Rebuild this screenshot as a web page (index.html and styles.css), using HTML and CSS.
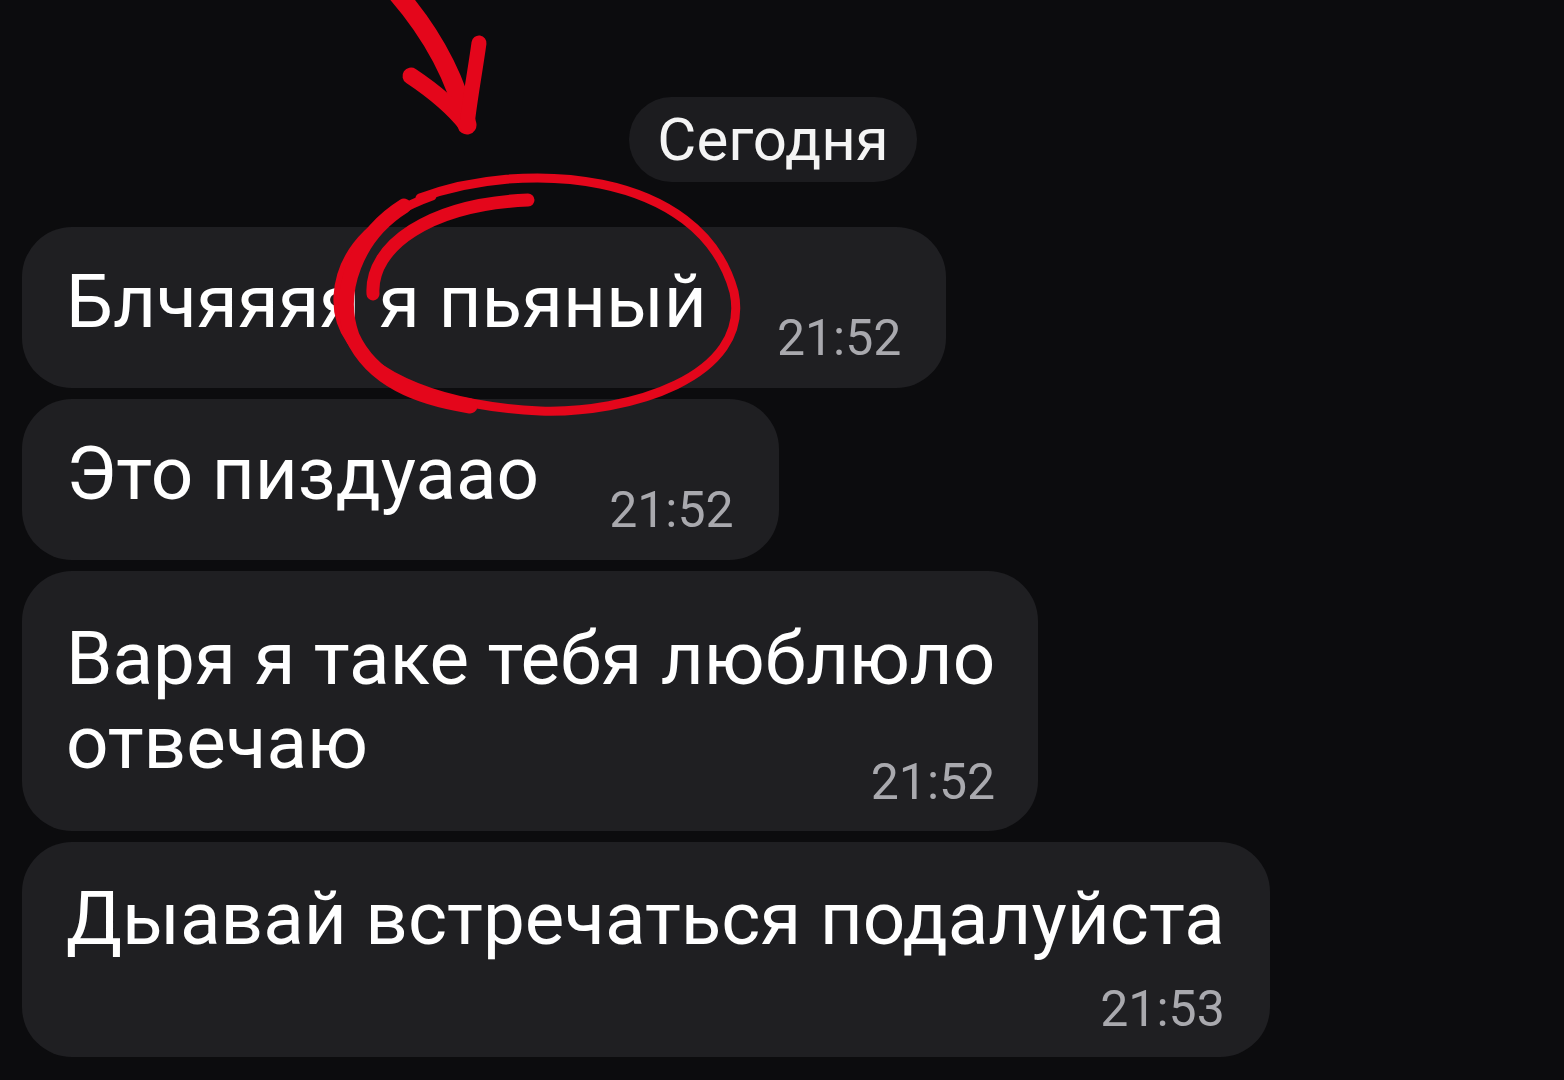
FILE: index.html
```html
<!DOCTYPE html>
<html lang="ru">
<head>
<meta charset="utf-8">
<title>Чат</title>
<link rel="stylesheet" href="styles.css">
</head>
<body>
<main class="chat">
  <div class="date-pill">Сегодня</div>
  <ul class="messages">
    <li class="bubble">
      <span class="bubble__text">Блчяяяя я пьяный</span>
      <span class="bubble__time">21:52</span>
    </li>
    <li class="bubble">
      <span class="bubble__text">Это пиздуаао</span>
      <span class="bubble__time">21:52</span>
    </li>
    <li class="bubble bubble--multiline">
      <span class="bubble__text">Варя я таке тебя люблюло<br>отвечаю</span>
      <span class="bubble__time">21:52</span>
    </li>
    <li class="bubble bubble--stacked">
      <span class="bubble__text">Дыавай встречаться подалуйста</span>
      <span class="bubble__time">21:53</span>
    </li>
  </ul>
</main>

<svg class="scribble" width="1564" height="1080" viewBox="0 0 1564 1080" aria-hidden="true">
  <g fill="none" stroke="#e4061b" stroke-linecap="round" stroke-linejoin="round">
    <!-- arrow -->
    <path d="M396 -8 C424 24 454 70 467 125" stroke-width="19"/>
    <path d="M411 76 C432 90 452 106 467 125" stroke-width="17"/>
    <path d="M479 43 C475 72 470 98 467 125" stroke-width="15"/>
    <!-- loop around the words -->
    <path d="M373 294 C370 246 430 204 528 200" stroke-width="13"/>
    <path d="M420 198 C520 160 700 168 734 292 C752 378 626 414 540 411 C420 405 334 362 338 296 C341 246 382 214 432 196" stroke-width="9"/>
    <path d="M404 206 C356 236 336 292 352 336 C372 380 418 398 470 406" stroke-width="15"/>
  </g>
</svg>
</body>
</html>
```

FILE: styles.css
```css
html, body {
  margin: 0;
  padding: 0;
  background: #0c0c0e;
  overflow: hidden;
}

body {
  width: 1564px;
  height: 1080px;
  position: relative;
  font-family: Roboto, "Noto Sans", "Liberation Sans", sans-serif;
  color: #ffffff;
}

.chat {
  display: flex;
  flex-direction: column;
  align-items: flex-start;
  padding: 97px 40px 0 22px;
}

.date-pill {
  align-self: center;
  height: 85px;
  padding: 0 28px;
  border-radius: 43px;
  background: #1c1c1f;
  font-size: 60px;
  line-height: 85px;
  color: #f4f4f4;
}

.messages {
  list-style: none;
  margin: 45px 0 0;
  padding: 0;
  display: flex;
  flex-direction: column;
  align-items: flex-start;
  gap: 11px;
}

.bubble {
  display: flex;
  align-items: flex-end;
  gap: 70px;
  padding: 33px 45px 21px 44px;
  border-radius: 50px;
  background: #1f1f22;
}

.bubble__text {
  font-size: 74.6px;
  line-height: 84px;
  margin-bottom: 23px;
  white-space: nowrap;
}

.bubble__time {
  font-size: 50px;
  line-height: 58px;
  color: #a9a9ae;
  white-space: nowrap;
}

/* two-line message: time tucks under the end of the last line */
.bubble--multiline {
  flex-direction: column;
  gap: 0;
  padding-top: 46px;
  padding-right: 43px;
  padding-bottom: 20px;
}

.bubble--multiline .bubble__text {
  margin-bottom: 0;
}

.bubble--multiline .bubble__time {
  margin-top: -32px;
}

/* full-width line: time drops to its own row */
.bubble--stacked {
  flex-direction: column;
  gap: 0;
  padding-top: 35px;
  padding-bottom: 19px;
}

.bubble--stacked .bubble__text {
  margin-bottom: 0;
}

.bubble--stacked .bubble__time {
  margin-top: 19px;
}

.scribble {
  position: absolute;
  left: 0;
  top: 0;
  pointer-events: none;
}
```
